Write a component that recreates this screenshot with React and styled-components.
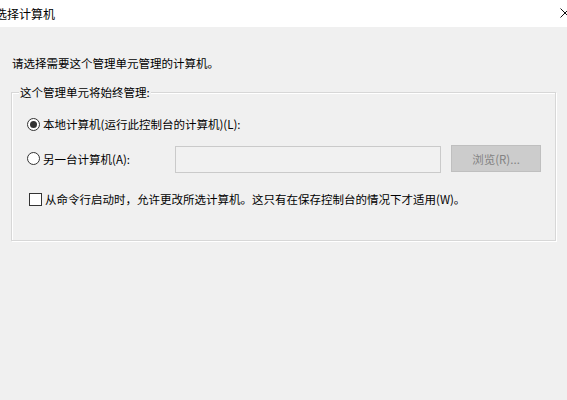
import React from 'react'
import styled, { createGlobalStyle } from 'styled-components'

const GlobalStyle = createGlobalStyle`
  html, body {
    margin: 0;
    padding: 0;
    background: #f0f0f0;
  }
  body {
    font-family: "Noto Sans CJK SC", "Microsoft YaHei", sans-serif;
    font-size: 11.5px;
    color: #000;
  }
`

const Window = styled.div`
  width: 567px;
  height: 400px;
  overflow: hidden;
  background: #f0f0f0;
`

const TitleBar = styled.div`
  height: 27px;
  background: #fff;
  display: flex;
  align-items: center;
  justify-content: space-between;
`

const Title = styled.span`
  margin-left: -5px;
  font-size: 12px;
  line-height: 16px;
`

const CloseIcon = styled.svg`
  width: 10px;
  height: 10px;
  margin-right: -3px;
  margin-top: -1px;
`

const Content = styled.div`
  padding: 28px 12px 0 12px;
`

const Prompt = styled.div`
  line-height: 16px;
`

const Group = styled.fieldset`
  margin: 13px -1px 0 -1px;
  padding: 14px 14px 31px 15px;
  min-width: 0;
  border: 1px solid #d7d7d7;
  box-shadow: inset 1px 1px 0 #fff, 1px 1px 0 #fff;
`

const Legend = styled.legend`
  margin-left: -8px;
  padding: 0 1px;
  line-height: 16px;
  background: #f0f0f0;
`

const Row = styled.div`
  display: flex;
  align-items: center;
  height: ${p => p.$h || 20}px;
  margin-top: ${p => p.$top || 0}px;
  padding-left: ${p => p.$indent || 0}px;
`

const Option = styled.label`
  display: flex;
  align-items: center;
  gap: 3px;
  flex: none;
  width: ${p => (p.$w ? `${p.$w}px` : 'auto')};
  line-height: 16px;
`

const Radio = styled.span`
  box-sizing: border-box;
  width: 13px;
  height: 13px;
  border-radius: 50%;
  border: 1px solid #333;
  background: #fff;
  display: flex;
  align-items: center;
  justify-content: center;
  flex: none;

  &::after {
    content: '';
    width: 7px;
    height: 7px;
    border-radius: 50%;
    background: ${p => (p.$checked ? '#333' : 'transparent')};
  }
`

const Check = styled.span`
  box-sizing: border-box;
  width: 13px;
  height: 13px;
  border: 1px solid #333;
  background: #fff;
  flex: none;
`

const Field = styled.input`
  box-sizing: border-box;
  flex: 1;
  min-width: 0;
  height: 27px;
  margin: 2px 0 0 0;
  border: 1px solid #cacaca;
  background: #f1f1f1;
  outline: none;
`

const Button = styled.button`
  box-sizing: border-box;
  width: 90px;
  height: 27px;
  margin-left: 10px;
  border: 1px solid #bfbfbf;
  background: #cccccc;
  color: #838383;
  font-family: inherit;
  font-size: 11.5px;
  padding: 0;
`

export default function App() {
  return (
    <Window>
      <GlobalStyle />
      <TitleBar>
        <Title>选择计算机</Title>
        <CloseIcon viewBox="0 0 10 10">
          <path d="M0.5 0.5 L9.5 9.5 M9.5 0.5 L0.5 9.5" stroke="#111" strokeWidth="1" fill="none" />
        </CloseIcon>
      </TitleBar>
      <Content>
        <Prompt>请选择需要这个管理单元管理的计算机。</Prompt>
        <Group>
          <Legend>这个管理单元将始终管理:</Legend>
          <Row>
            <Option>
              <Radio $checked />
              本地计算机(运行此控制台的计算机)(L):
            </Option>
          </Row>
          <Row $h={27} $top={11}>
            <Option $w={148}>
              <Radio />
              另一台计算机(A):
            </Option>
            <Field disabled />
            <Button disabled>浏览(R)...</Button>
          </Row>
          <Row $top={17} $indent={2}>
            <Option>
              <Check />
              从命令行启动时，允许更改所选计算机。这只有在保存控制台的情况下才适用(W)。
            </Option>
          </Row>
        </Group>
      </Content>
    </Window>
  )
}
